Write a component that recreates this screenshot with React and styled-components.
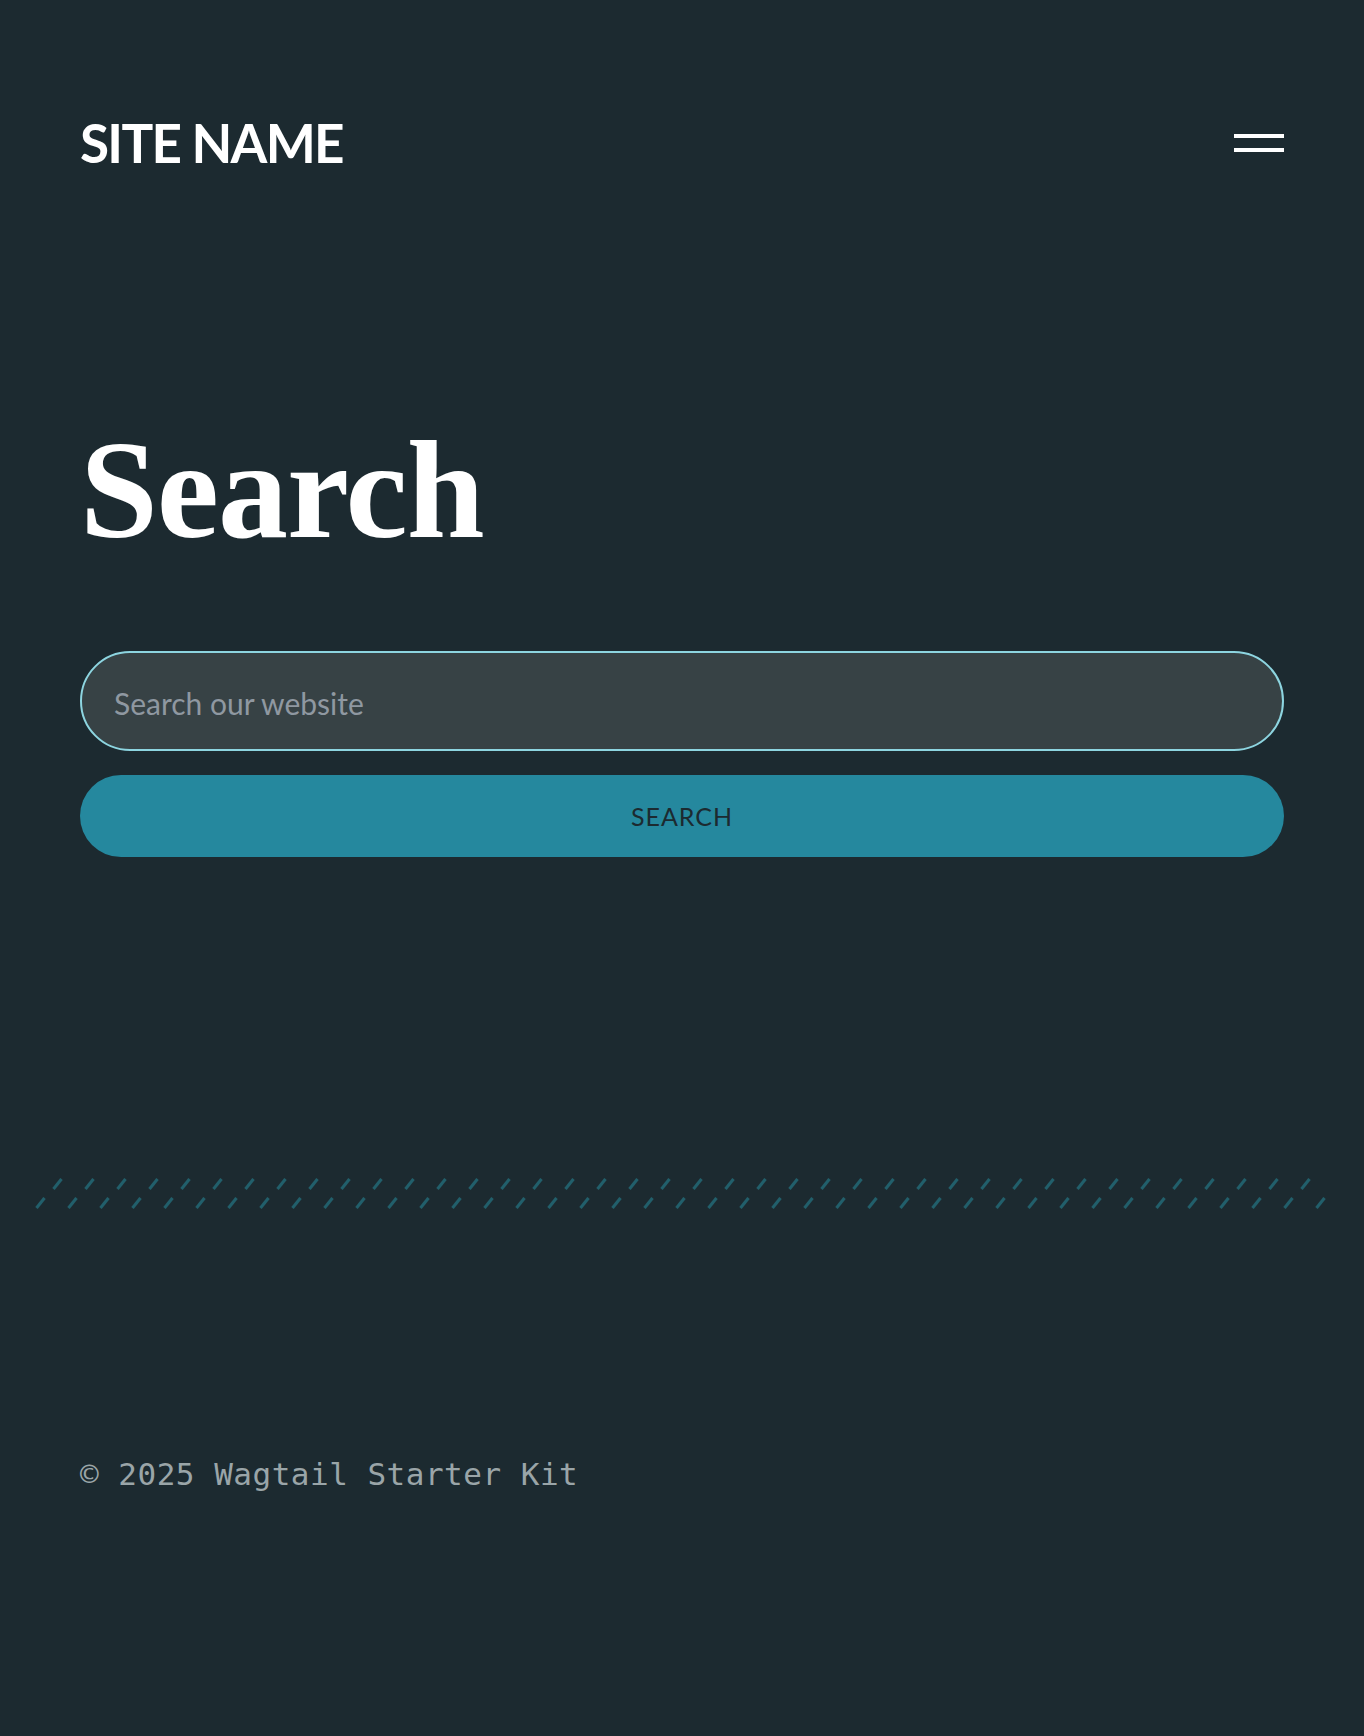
import React from "react";
import styled, { createGlobalStyle } from "styled-components";

const Global = createGlobalStyle`
  html, body { margin: 0; padding: 0; background: #1c2a30; }
  body { font-family: Lato, "Noto Sans", sans-serif; }
  * { box-sizing: border-box; }
`;

const Page = styled.div`
  min-height: 1736px;
  background: #1c2a30;
  display: flex;
  flex-direction: column;
`;

const Container = styled.div`
  padding: 0 80px;
`;

const Header = styled.header`
  display: flex;
  justify-content: space-between;
  align-items: center;
  padding-top: 116px;
`;

const SiteName = styled.a`
  font-family: Lato, "Noto Sans", sans-serif;
  font-weight: 700;
  font-size: 53px;
  line-height: 1;
  color: #ffffff;
  text-decoration: none;
  letter-spacing: -1.7px;
`;

const MenuButton = styled.button`
  display: flex;
  flex-direction: column;
  gap: 10px;
  background: none;
  border: 0;
  padding: 0;
  cursor: pointer;
`;

const Bar = styled.span`
  display: block;
  width: 50px;
  height: 4px;
  background: #ffffff;
`;

const Title = styled.h1`
  margin: 251px 0 0;
  font-family: "Liberation Serif", "Times New Roman", serif;
  font-weight: 700;
  font-size: 140px;
  line-height: 1;
  color: #ffffff;
  letter-spacing: -1px;
`;

const Form = styled.form`
  margin-top: 91px;
  display: flex;
  flex-direction: column;
  gap: 24px;
`;

const Input = styled.input`
  width: 100%;
  height: 100px;
  border: 2px solid #8dd5e0;
  border-radius: 999px;
  background: #374245;
  padding: 4px 32px 0;
  font-family: Lato, "Noto Sans", sans-serif;
  font-size: 30px;
  color: #ffffff;
  outline: none;
  &::placeholder { color: #8f98a1; }
`;

const SubmitButton = styled.button`
  width: 100%;
  height: 82px;
  border: 0;
  border-radius: 999px;
  background: #25889e;
  color: #1c2a30;
  font-family: Lato, "Noto Sans", sans-serif;
  font-size: 25px;
  letter-spacing: 1px;
  text-transform: uppercase;
  cursor: pointer;
`;

const Divider = styled.svg`
  display: block;
  margin: 318px 32px 0;
  width: calc(100% - 64px);
  height: 40px;
`;

const Footer = styled.footer`
  margin-top: 244px;
  padding: 0 80px 245px;
`;

const Copyright = styled.p`
  margin: 0;
  font-family: "DejaVu Sans Mono", "Liberation Mono", monospace;
  font-size: 31px;
  letter-spacing: 0.5px;
  line-height: 1;
  color: #9aa5a8;
`;

export default function App() {
  return (
    <Page>
      <Global />
      <Container>
        <Header>
          <SiteName href="#">SITE NAME</SiteName>
          <MenuButton aria-label="Menu">
            <Bar />
            <Bar />
          </MenuButton>
        </Header>
        <Title>Search</Title>
        <Form onSubmit={(e) => e.preventDefault()}>
          <Input type="text" placeholder="Search our website" />
          <SubmitButton type="submit">Search</SubmitButton>
        </Form>
      </Container>
      <Divider aria-hidden="true">
        <defs>
          <pattern id="hatch" width="32" height="40" patternUnits="userSpaceOnUse">
            <line x1="21.5" y1="14" x2="29.5" y2="4" stroke="#215f6b" strokeWidth="3" />
            <line x1="4.5" y1="33" x2="12.5" y2="23" stroke="#215f6b" strokeWidth="3" />
          </pattern>
        </defs>
        <rect width="100%" height="40" fill="url(#hatch)" />
      </Divider>
      <Footer>
        <Copyright>© 2025 Wagtail Starter Kit</Copyright>
      </Footer>
    </Page>
  );
}
